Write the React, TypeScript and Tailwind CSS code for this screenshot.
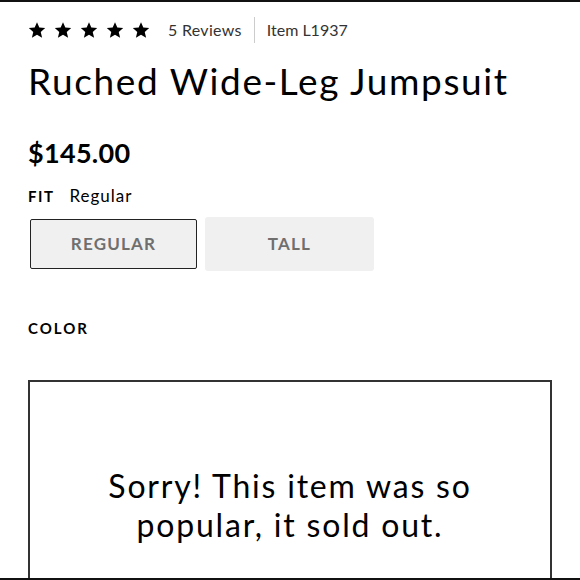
function Stars() {
  return (
    <div className="flex items-center gap-[8px]">
      {[0, 1, 2, 3, 4].map((i) => (
        <svg key={i} viewBox="0 0 24 24" className="h-[18px] w-[18px]" fill="black">
          <path d="M12 1.5l3.1 7.2 7.8.7-5.9 5.2 1.8 7.7L12 18.2l-6.8 4.1 1.8-7.7L1.1 9.4l7.8-.7z" />
        </svg>
      ))}
    </div>
  );
}

export default function App() {
  return (
    <div
      className="h-[580px] w-[580px] overflow-hidden border-y-2 border-[#111] bg-white text-black"
      style={{ fontFamily: "Lato, 'Open Sans', sans-serif" }}
    >
      <div className="flex flex-col px-[28px] pt-[15px]">
        <div className="flex h-[26px] items-center">
          <Stars />
          <span className="ml-[18px] text-[16px] tracking-[0.3px] text-[#333]">5 Reviews</span>
          <span className="mx-[12px] h-[26px] w-px bg-[#ccc]" />
          <span className="text-[16px] text-[#333]">Item L1937</span>
        </div>
        <h1 className="mt-[18px] text-[37px] leading-[40px] tracking-[1.6px]">Ruched Wide-Leg Jumpsuit</h1>
        <div className="mt-[37px] text-[27px] font-bold leading-[30px] tracking-[0.3px]">$145.00</div>
        <div className="mt-[17px] flex items-center text-[16px] leading-[22px]">
          <span className="text-[15px] font-bold tracking-[1.5px]">FIT</span>
          <span className="ml-[15px] text-[17px] tracking-[1px]">Regular</span>
        </div>
        <div className="mt-[10px] flex items-center gap-[8px]">
          <button className="ml-[2px] h-[50px] w-[167px] rounded-[2px] border-[1.5px] border-[#222] bg-[#f0f0f0] text-[17px] font-bold tracking-[1.2px] text-[#6f6f6f]">
            REGULAR
          </button>
          <button className="h-[54px] w-[169px] rounded-[3px] bg-[#f0f0f0] text-[17px] font-bold tracking-[1.2px] text-[#6f6f6f]">
            TALL
          </button>
        </div>
        <div className="mt-[47px] text-[15px] font-bold leading-[20px] tracking-[2px]">COLOR</div>
        <div className="mt-[42px] flex h-[220px] w-[524px] flex-col items-center border-2 border-b-0 border-[#333] pt-[84px]">
          <p className="text-center text-[32px] leading-[39px] tracking-[1.8px]">
            Sorry! This item was so
            <br />
            popular, it sold out.
          </p>
        </div>
      </div>
    </div>
  );
}
